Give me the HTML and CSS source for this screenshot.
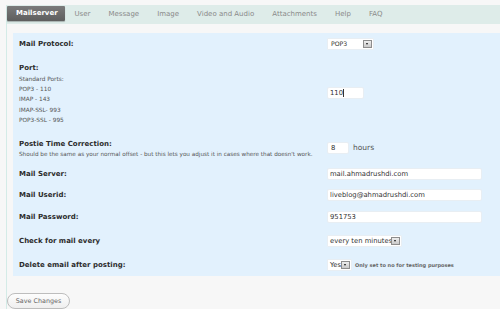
FILE: index.html
```html
<!DOCTYPE html>
<html lang="en">
<head>
    <meta charset="UTF-8">
    <title>Postie Settings</title>
    <link rel="stylesheet" href="styles.css">
</head>
<body>
<div id="wrap">
    <ul class="tabs">
        <li class="on">Mailserver</li>
        <li>User</li>
        <li>Message</li>
        <li>Image</li>
        <li>Video and Audio</li>
        <li>Attachments</li>
        <li>Help</li>
        <li>FAQ</li>
    </ul>

    <div class="panel">
        <div class="row r1">
            <div class="label"><b>Mail Protocol:</b></div>
            <div class="field">
                <span class="sel w47">POP3<i class="arrow"></i></span>
            </div>
        </div>
        <div class="row r2">
            <div class="label">
                <b>Port:</b>
                <small>Standard Ports:</small>
                <small>POP3 - 110</small>
                <small>IMAP - 143</small>
                <small>IMAP-SSL- 993</small>
                <small>POP3-SSL - 995</small>
            </div>
            <div class="field">
                <span class="inp w37">110<i class="caret"></i></span>
            </div>
        </div>
        <div class="row r3">
            <div class="label">
                <b>Postie Time Correction:</b>
                <small>Should be the same as your normal offset - but this lets you adjust it in cases where that doesn't work.</small>
            </div>
            <div class="field">
                <span class="inp w23">8</span>
                <span class="unit">hours</span>
            </div>
        </div>
        <div class="row r4">
            <div class="label"><b>Mail Server:</b></div>
            <div class="field"><span class="inp wide">mail.ahmadrushdi.com</span></div>
        </div>
        <div class="row r5">
            <div class="label"><b>Mail Userid:</b></div>
            <div class="field"><span class="inp wide">liveblog@ahmadrushdi.com</span></div>
        </div>
        <div class="row r6">
            <div class="label"><b>Mail Password:</b></div>
            <div class="field"><span class="inp wide">951753</span></div>
        </div>
        <div class="row r7">
            <div class="label"><b>Check for mail every</b></div>
            <div class="field">
                <span class="sel w75">every ten minutes<i class="arrow"></i></span>
            </div>
        </div>
        <div class="row r8">
            <div class="label"><b>Delete email after posting:</b></div>
            <div class="field">
                <span class="sel w25">Yes<i class="arrow"></i></span>
                <span class="note">Only set to no for testing purposes</span>
            </div>
        </div>
    </div>

    <div class="actions">
        <span class="btn">Save Changes</span>
    </div>
</div>
</body>
</html>
```

FILE: styles.css
```css
body, div, ul, li, span, b, small {
    margin: 0;
    padding: 0;
}

ul, li {
    list-style-type: none;
}

body {
    background-color: #f7f7f7;
    font-family: "DejaVu Sans", Verdana, sans-serif;
    color: #333;
    overflow: hidden;
}

#wrap {
    margin: 5px 0 0 6px;
    height: 304px;
    border-left: 1px solid #d4ebe7;
}

/* tabs */
.tabs {
    display: flex;
    align-items: center;
    height: 19px;
    background-color: #deece9;
}

.tabs li {
    padding: 0 8.5px;
    font-size: 7px;
    line-height: 15px;
    color: #8a8a8a;
}

.tabs li + li {
    margin-left: 1px;
}

.tabs li.on {
    margin-top: -2px;
    padding: 0 9px;
    width: 40px;
    color: #fff;
    font-weight: bold;
    background: linear-gradient(#7a7a7a, #5e5e5e);
    border-radius: 1px;
    box-shadow: 0 1px 1px rgba(0, 0, 0, .25);
}

/* form panel */
.panel {
    margin: 9px 0 0 6px;
    height: 243px;
    background-color: #e2f1fd;
}

.row {
    display: grid;
    grid-template-columns: 314px 1fr;
    align-items: center;
}

.r1 { height: 22px; }
.r2 { height: 77px; }
.r3 { height: 32px; }
.r4 { height: 20px; }
.r5 { height: 22px; }
.r6 { height: 22px; }
.r7 { height: 26px; }
.r8 { height: 22px; }

.label {
    padding: 1px 0 0 6px;
}

.label b {
    display: block;
    font-size: 7px;
    line-height: 11px;
    color: #2c2c2c;
}

.label small {
    display: block;
    font-size: 5.8px;
    line-height: 10.3px;
    color: #555;
}

.r3 .label small {
    font-size: 5.7px;
    line-height: 9px;
    white-space: nowrap;
}

.field {
    display: flex;
    align-items: center;
    margin-top: -1px;
}

.inp,
.sel {
    display: flex;
    align-items: center;
    box-sizing: border-box;
    height: 12px;
    padding-left: 2px;
    background-color: #fff;
    border: 1px solid #e8eef3;
    border-radius: 2px;
    font-size: 6.8px;
    color: #333;
}

.wide { width: 155px; }
.w37 { width: 37px; }
.w23 { width: 22px; padding-left: 3px; }
.w47 { width: 47px; }
.w75 { width: 75px; }
.w25 { width: 25px; }

.sel {
    position: relative;
    border-radius: 1px;
    white-space: nowrap;
}

.w47 {
    font-size: 6.2px;
    padding-left: 3px;
}

.sel .arrow {
    position: absolute;
    right: 1px;
    top: 1px;
    width: 9px;
    height: 8px;
    box-sizing: border-box;
    border: 1px solid #8d8d8d;
    background: linear-gradient(#eee, #c9c9c9);
}

.sel .arrow:after {
    content: "";
    position: absolute;
    left: 2px;
    top: 2.5px;
    border-left: 1.5px solid transparent;
    border-right: 1.5px solid transparent;
    border-top: 2px solid #111;
}

.caret {
    display: inline-block;
    width: 0;
    height: 8px;
    border-left: 1px solid #333;
}

.unit {
    margin-left: 4px;
    font-size: 7.5px;
    color: #555;
}

.note {
    margin-left: 3px;
    font-size: 5px;
    font-weight: bold;
    color: #666;
}

/* save button */
.actions {
    margin-top: 12px;
}

.btn {
    display: inline-block;
    box-sizing: border-box;
    width: 63px;
    height: 16px;
    line-height: 14px;
    text-align: center;
    font-size: 6.4px;
    color: #666;
    background: linear-gradient(#fdfdfd, #efefef);
    border: 1px solid #bdbdbd;
    border-radius: 8px;
}
```
